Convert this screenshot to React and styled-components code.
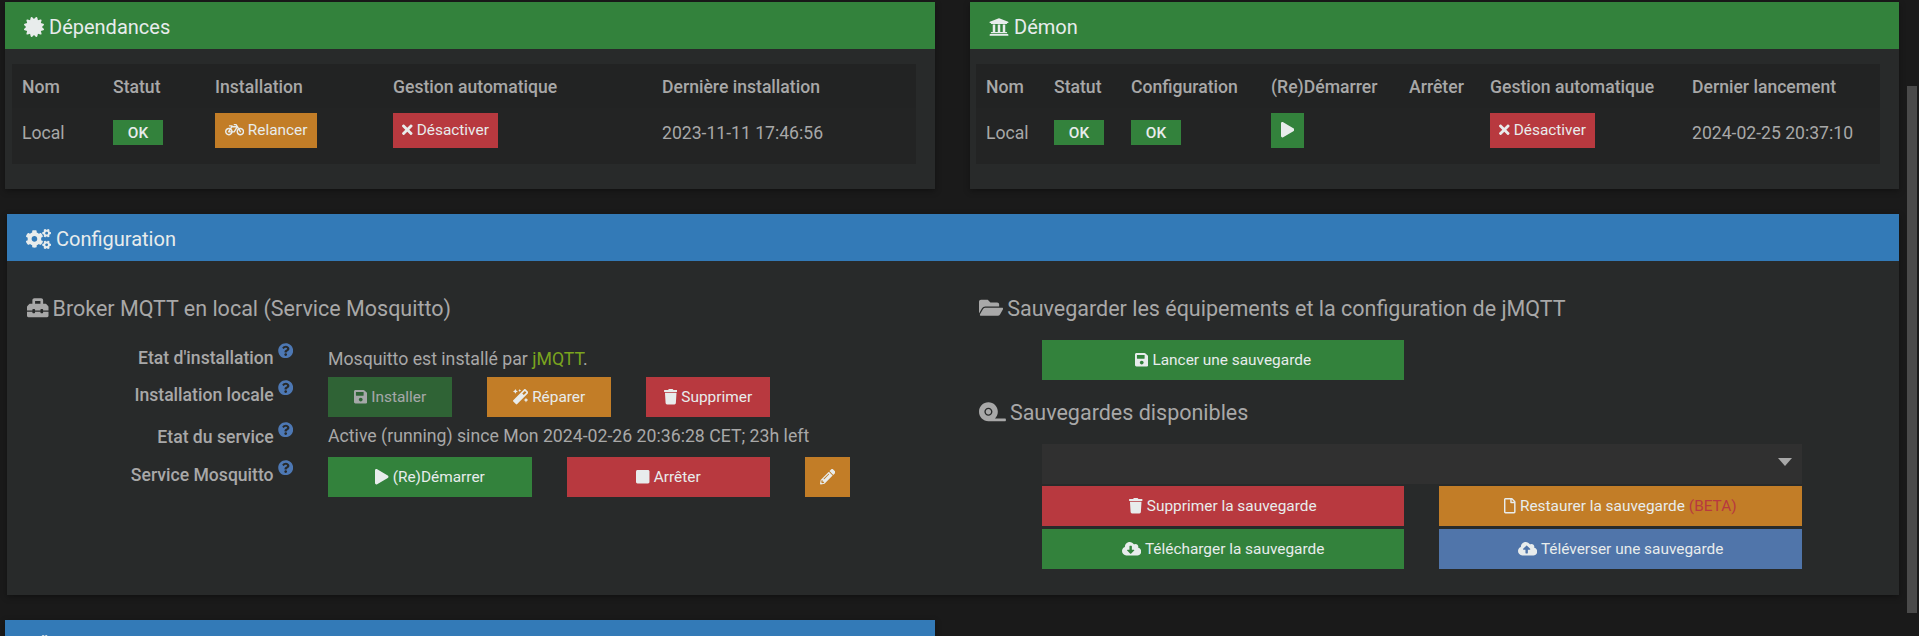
import React from 'react';
import styled, { createGlobalStyle } from 'styled-components';
import {
  FaCertificate, FaUniversity, FaBicycle, FaTimes, FaSave, FaMagic, FaTrash, FaPlay, FaStop,
  FaPencilAlt, FaToolbox, FaFolderOpen, FaTape, FaRegFile, FaCloudDownloadAlt, FaCloudUploadAlt,
  FaCogs, FaQuestionCircle,
} from 'react-icons/fa';

const Global = createGlobalStyle`
  html, body { margin: 0; padding: 0; height: 636px; overflow: hidden; background: #1a1a1a; }
  * { box-sizing: border-box; }
  body { font-family: Roboto, "Liberation Sans", sans-serif; font-size: 17.6px; color: #a8a8a8; }
`;

const GREEN = '#33823c';
const BLUE = '#337ab7';
const RED = '#b8393f';
const ORANGE = '#c27d27';
const SLATE = '#5075aa';

/* Icons keep the proportions of their glyph instead of being squeezed into a 1em square. */
const glyph = (Icon, ratio) => styled(Icon)`
  width: ${ratio}em;
  height: 1em;
  flex: none;
`;
const CertificateIcon = glyph(FaCertificate, 1);
const UniversityIcon = glyph(FaUniversity, 1);
const BicycleIcon = glyph(FaBicycle, 1.25);
const TimesIcon = glyph(FaTimes, 0.6875);
const SaveIcon = glyph(FaSave, 0.875);
const MagicIcon = glyph(FaMagic, 1);
const TrashIcon = glyph(FaTrash, 0.875);
const PlayIcon = glyph(FaPlay, 0.875);
const StopIcon = glyph(FaStop, 0.875);
const PencilIcon = glyph(FaPencilAlt, 1);
const ToolboxIcon = glyph(FaToolbox, 1);
const FolderIcon = glyph(FaFolderOpen, 1.125);
const TapeIcon = glyph(FaTape, 1.25);
const FileIcon = glyph(FaRegFile, 0.75);
const CloudDownIcon = glyph(FaCloudDownloadAlt, 1.25);
const CloudUpIcon = glyph(FaCloudUploadAlt, 1.25);
const CogsIcon = glyph(FaCogs, 1.25);

const Page = styled.div`
  position: relative;
  height: 636px;
  padding: 2px 20px 0 5px;
  overflow: hidden;
`;
const Scrollbar = styled.div`
  position: absolute;
  left: 1907px;
  top: 86px;
  width: 10px;
  height: 527px;
  background: #4a4a4a;
`;
const TopRow = styled.div`
  display: grid;
  grid-template-columns: 930px 929px;
  column-gap: 35px;
`;
const Panel = styled.section`
  background: #282a2a;
  box-shadow: 0 2px 6px rgba(0, 0, 0, 0.35);
`;
const TopPanel = styled(Panel)`
  height: 187px;
`;
const ConfigPanel = styled(Panel)`
  margin: 25px 0 25px 2px;
  height: 381px;
  width: 1892px;
`;
const BottomPanel = styled(Panel)`
  width: 930px;
`;
const PanelHeader = styled.h3`
  margin: 0;
  height: 47px;
  display: flex;
  align-items: center;
  justify-content: space-between;
  padding: 2px 25px 0 19px;
  background: ${(p) => p.$bg};
  color: #e8ecec;
  font-size: 20px;
  font-weight: 400;
`;
const Title = styled.span`
  display: inline-flex;
  align-items: center;
  gap: 5px;
`;
const TableBox = styled.table`
  margin: 15px 0 0 ${(p) => p.$left}px;
  width: ${(p) => p.$width}px;
  height: 100px;
  border-collapse: collapse;
  table-layout: fixed;
`;
const HeadCell = styled.th`
  height: 44px;
  padding: 2px 0 0 10px;
  background: #222323;
  color: #a8a8a8;
  font-size: 17.6px;
  font-weight: 500;
  text-align: left;
  white-space: nowrap;
`;
const Cell = styled.td`
  padding: 5px 0 0 10px;
  background: #232424;
  color: #a8a8a8;
  font-size: 17.6px;
  vertical-align: top;
  white-space: nowrap;
`;
const TimeCell = styled(Cell)`
  padding-top: 15px;
  line-height: 20px;
`;
const Badge = styled.span`
  display: flex;
  align-items: center;
  justify-content: center;
  width: 50px;
  height: 25px;
  margin-top: 7px;
  background: ${GREEN};
  color: #e8ecec;
  font-size: 15.4px;
  font-weight: 500;
`;
const TableButton = styled.span`
  display: inline-flex;
  align-items: center;
  justify-content: center;
  vertical-align: top;
  gap: 4px;
  width: ${(p) => p.$w}px;
  height: 35px;
  padding-bottom: 1px;
  background: ${(p) => p.$bg};
  color: #e8ecec;
  font-size: 15.4px;
`;
const ConfigBody = styled.div`
  display: grid;
  grid-template-columns: 972px 1fr;
  padding-top: 32px;
`;
const SectionTitle = styled.h4`
  margin: 0;
  height: 30px;
  display: flex;
  align-items: center;
  gap: 4px;
  color: #a8a8a8;
  font-size: 21.5px;
  font-weight: 400;
  white-space: nowrap;
`;
const LeftCol = styled.div`
  padding-left: 20px;
`;
const RightCol = styled.div``;
const Form = styled.div`
  margin: 17px 0 0 -20px;
  display: grid;
  grid-template-columns: 321px 1fr;
  grid-template-rows: 37px 40px 40px 40px;
`;
const Label = styled.div`
  display: flex;
  justify-content: flex-end;
  align-items: flex-start;
  gap: 4px;
  padding-top: ${(p) => p.$top}px;
  padding-right: 35px;
  color: #a8a8a8;
  font-size: 17.6px;
  font-weight: 500;
  line-height: 20px;
  white-space: nowrap;
`;
const Help = styled(FaQuestionCircle)`
  color: #4d78b4;
  font-size: 15.4px;
  margin-top: -5px;
  flex: none;
`;
const Control = styled.div`
  display: flex;
  align-items: center;
  font-size: 17.7px;
  white-space: nowrap;
`;
const Value = styled.span`
  margin-top: ${(p) => p.$top || 0}px;
  color: #a8a8a8;
`;
const Brand = styled.span`
  color: #7aa41e;
`;
const Button = styled.div`
  display: flex;
  align-items: center;
  justify-content: center;
  gap: 4px;
  flex: none;
  width: ${(p) => p.$w}px;
  height: 40px;
  margin-left: ${(p) => p.$ml || 0}px;
  background: ${(p) => p.$bg};
  color: #e8ecec;
  font-size: 15.4px;
  white-space: nowrap;
  opacity: ${(p) => (p.$off ? 0.65 : 1)};
`;
const Offset = styled.div`
  margin: ${(p) => p.$top}px 0 ${(p) => p.$bottom}px 63px;
  width: 760px;
`;
const Select = styled.div`
  position: relative;
  height: 40px;
  background: #303030;
  margin-bottom: 2px;
`;
const Caret = styled.span`
  position: absolute;
  right: 10px;
  top: 14px;
  border-left: 7px solid transparent;
  border-right: 7px solid transparent;
  border-top: 8px solid #a8a8a8;
`;
const ButtonGrid = styled.div`
  display: grid;
  grid-template-columns: 362px 363px;
  column-gap: 35px;
  row-gap: 3px;
`;
const Beta = styled.span`
  color: ${RED};
`;
const HeaderAction = styled.div`
  width: 119px;
  height: 30px;
  margin-top: 24px;
  background: ${GREEN};
`;

const Dep = () => (
  <TopPanel>
    <PanelHeader $bg={GREEN}><Title><CertificateIcon />Dépendances</Title></PanelHeader>
    <TableBox $left={7} $width={904}>
      <colgroup><col width="91" /><col width="102" /><col width="178" /><col width="269" /><col /></colgroup>
      <thead>
        <tr>
          <HeadCell>Nom</HeadCell><HeadCell>Statut</HeadCell><HeadCell>Installation</HeadCell>
          <HeadCell>Gestion automatique</HeadCell><HeadCell>Dernière installation</HeadCell>
        </tr>
      </thead>
      <tbody>
        <tr>
          <TimeCell>Local</TimeCell>
          <Cell><Badge>OK</Badge></Cell>
          <Cell><TableButton $bg={ORANGE} $w={102}><BicycleIcon />Relancer</TableButton></Cell>
          <Cell><TableButton $bg={RED} $w={105}><TimesIcon />Désactiver</TableButton></Cell>
          <TimeCell>2023-11-11 17:46:56</TimeCell>
        </tr>
      </tbody>
    </TableBox>
  </TopPanel>
);

const Daemon = () => (
  <TopPanel>
    <PanelHeader $bg={GREEN}><Title><UniversityIcon />Démon</Title></PanelHeader>
    <TableBox $left={6} $width={904}>
      <colgroup><col width="68" /><col width="77" /><col width="140" /><col width="138" /><col width="81" /><col width="202" /><col /></colgroup>
      <thead>
        <tr>
          <HeadCell>Nom</HeadCell><HeadCell>Statut</HeadCell><HeadCell>Configuration</HeadCell>
          <HeadCell>(Re)Démarrer</HeadCell><HeadCell>Arrêter</HeadCell>
          <HeadCell>Gestion automatique</HeadCell><HeadCell>Dernier lancement</HeadCell>
        </tr>
      </thead>
      <tbody>
        <tr>
          <TimeCell>Local</TimeCell>
          <Cell><Badge>OK</Badge></Cell>
          <Cell><Badge>OK</Badge></Cell>
          <Cell><TableButton $bg={GREEN} $w={33}><PlayIcon /></TableButton></Cell>
          <Cell />
          <Cell><TableButton $bg={RED} $w={105}><TimesIcon />Désactiver</TableButton></Cell>
          <TimeCell>2024-02-25 20:37:10</TimeCell>
        </tr>
      </tbody>
    </TableBox>
  </TopPanel>
);

const FormLabel = ({ top, children }) => (
  <Label $top={top}>{children}<Help /></Label>
);

const Config = () => (
  <ConfigPanel>
    <PanelHeader $bg={BLUE}><Title><CogsIcon />Configuration</Title></PanelHeader>
    <ConfigBody>
      <LeftCol>
        <SectionTitle><ToolboxIcon />Broker MQTT en local (Service Mosquitto)</SectionTitle>
        <Form>
          <FormLabel top={8}>Etat d'installation</FormLabel>
          <Control><Value $top={1}>Mosquitto est installé par <Brand>jMQTT</Brand>.</Value></Control>
          <FormLabel top={8}>Installation locale</FormLabel>
          <Control>
            <Button $bg={GREEN} $w={124} $off><SaveIcon />Installer</Button>
            <Button $bg={ORANGE} $w={124} $ml={35}><MagicIcon />Réparer</Button>
            <Button $bg={RED} $w={124} $ml={35}><TrashIcon />Supprimer</Button>
          </Control>
          <FormLabel top={10}>Etat du service</FormLabel>
          <Control><Value $top={-2}>Active (running) since Mon 2024-02-26 20:36:28 CET; 23h left</Value></Control>
          <FormLabel top={8}>Service Mosquitto</FormLabel>
          <Control>
            <Button $bg={GREEN} $w={204}><PlayIcon />(Re)Démarrer</Button>
            <Button $bg={RED} $w={203} $ml={35}><StopIcon />Arrêter</Button>
            <Button $bg={ORANGE} $w={45} $ml={35}><PencilIcon /></Button>
          </Control>
        </Form>
      </LeftCol>
      <RightCol>
        <SectionTitle><FolderIcon />Sauvegarder les équipements et la configuration de jMQTT</SectionTitle>
        <Offset $top={17} $bottom={17}>
          <Button $bg={GREEN} $w={362}><SaveIcon />Lancer une sauvegarde</Button>
        </Offset>
        <SectionTitle><TapeIcon />Sauvegardes disponibles</SectionTitle>
        <Offset $top={17} $bottom={0}>
          <Select><Caret /></Select>
          <ButtonGrid>
            <Button $bg={RED} $w={362}><TrashIcon />Supprimer la sauvegarde</Button>
            <Button $bg={ORANGE} $w={363}><FileIcon />Restaurer la sauvegarde <Beta>(BETA)</Beta></Button>
            <Button $bg={GREEN} $w={362}><CloudDownIcon />Télécharger la sauvegarde</Button>
            <Button $bg={SLATE} $w={363}><CloudUpIcon />Téléverser une sauvegarde</Button>
          </ButtonGrid>
        </Offset>
      </RightCol>
    </ConfigBody>
  </ConfigPanel>
);

export default function App() {
  return (
    <Page>
      <Global />
      <TopRow>
        <Dep />
        <Daemon />
      </TopRow>
      <Config />
      <BottomPanel>
        <PanelHeader $bg={BLUE}>
          <Title><CogsIcon />Paramètres avancés</Title>
          <HeaderAction />
        </PanelHeader>
      </BottomPanel>
      <Scrollbar />
    </Page>
  );
}
